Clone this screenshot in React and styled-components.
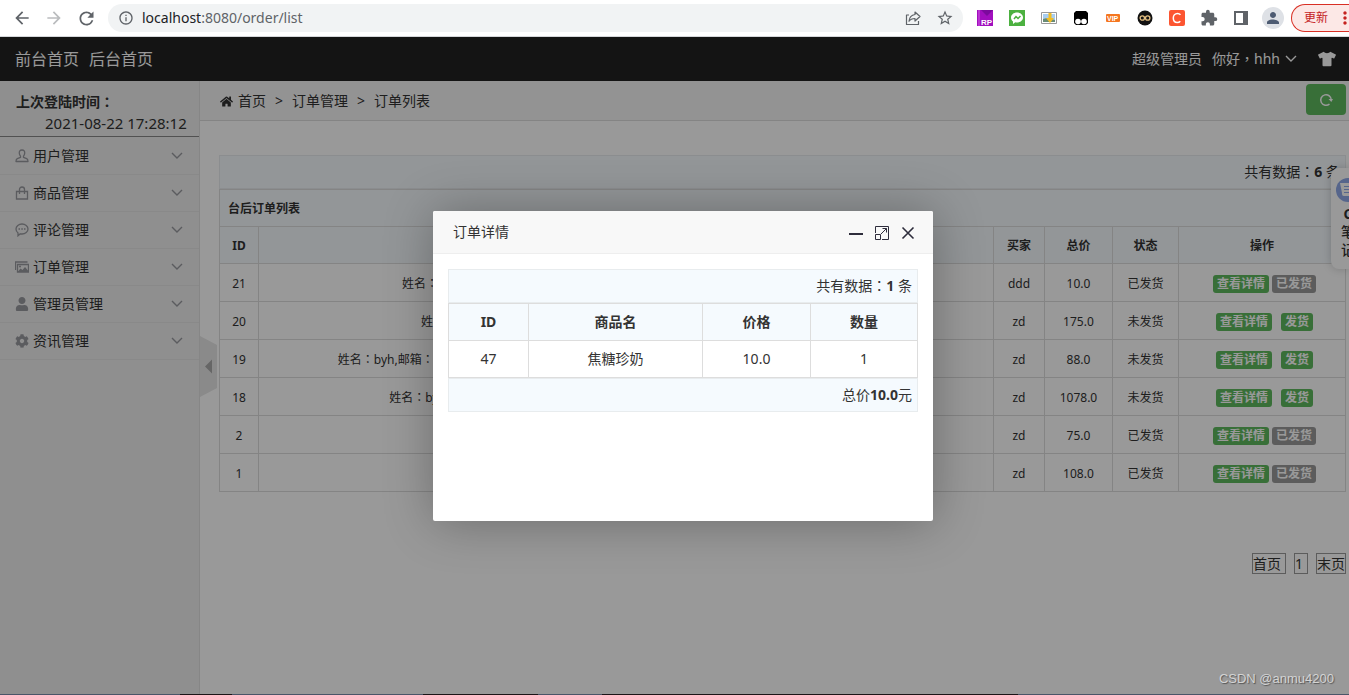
import React, { useState } from 'react'
import styled, { createGlobalStyle, css } from 'styled-components';
import { MdArrowBack, MdArrowForward, MdRefresh, MdInfoOutline, MdStarBorder, MdExtension, MdPerson, MdMoreVert } from 'react-icons/md';
import { FaTshirt, FaHome, FaCog, FaUser } from 'react-icons/fa';

const GlobalStyle = createGlobalStyle`
* {
  box-sizing: border-box;
}
body {
  margin: 0;
  overflow: hidden;
  color: #333;
  font-family: "Noto Sans", "Noto Sans CJK SC", sans-serif;
  font-size: 14px;
  line-height: 20px;
}
a {
  color: inherit;
  text-decoration: none;
}
button {
  padding: 0;
  border: 0;
  background: none;
  color: inherit;
  font: inherit;
  cursor: pointer;
}
svg {
  display: block;
  flex: none;
}
`;

const Page = styled.div`
display: flex;
flex-direction: column;
height: 100vh;
overflow: hidden;
`;

/* full-width punctuation centred in its box */
const Mark = styled.i`
font-family: "Noto Sans CJK TC", sans-serif;
font-style: normal;
line-height: 1;
`;

/* browser bar */
const BrowserBar = styled.div`
display: flex;
align-items: center;
flex: none;
height: 37px;
padding-left: 12px;
border-bottom: 1px solid #d5d7da;
background: #fff;
color: #5f6368;
overflow: hidden;
`;

const NavButton = styled.button`
display: flex;
justify-content: center;
align-items: center;
flex: none;
width: 20px;
height: 28px;
margin-right: 12px;
color: ${props => props.$faded ? '#babcbe' : '#5f6368'};
`;

const AddressBar = styled.div`
display: flex;
align-items: center;
flex: 1;
min-width: 0;
height: 28px;
padding: 0 9px 0 10px;
border-radius: 14px;
background: #f1f3f4;
`;

const Url = styled.div`
flex: 1;
margin-left: 8px;
font-size: 14px;
b {
  font-weight: 400;
  color: #202124;
}
`;

const AddressActions = styled.div`
display: flex;
align-items: center;
gap: 14px;
`;

const Extensions = styled.div`
display: flex;
align-items: center;
gap: 14px;
flex: none;
margin: 0 12px 0 13px;
`;

const ExtensionButton = styled.button`
display: flex;
justify-content: center;
align-items: center;
width: 18px;
height: 18px;
color: #5f6368;
`;

const Avatar = styled.button`
display: flex;
justify-content: center;
align-items: center;
flex: none;
width: 22px;
height: 22px;
margin-right: 7px;
border-radius: 50%;
background: #dee1e6;
color: #4d5b72;
`;

const UpdateButton = styled.button`
display: flex;
align-items: center;
flex: none;
width: 58px;
height: 28px;
padding-left: 12px;
border: 1px solid #d93025;
border-right: 0;
border-radius: 14px 0 0 14px;
background: #fce8e6;
color: #c5221f;
font-size: 12px;
white-space: nowrap;
overflow: hidden;
svg {
  margin-left: 7px;
}
`;

/* page */
const Viewport = styled.div`
display: flex;
flex-direction: column;
flex: 1;
min-height: 0;
position: relative;
overflow: hidden;
background: #fff;
`;

const Header = styled.header`
display: flex;
justify-content: space-between;
align-items: center;
flex: none;
height: 44px;
padding: 0 13px 0 15px;
background: #222;
color: #fff;
`;

const HeaderLinks = styled.nav`
display: flex;
gap: 10px;
font-size: 16px;
`;

const UserBar = styled.div`
display: flex;
align-items: center;
gap: 10px;
button {
  display: flex;
  align-items: center;
  gap: 5px;
}
button + button {
  margin-left: 11px;
}
`;

const Body = styled.div`
display: flex;
flex: 1;
min-height: 0;
`;

const Sidebar = styled.aside`
flex: none;
width: 200px;
border-right: 1px solid #e0e0e0;
background: #eee;
`;

const LastLogin = styled.div`
height: 56px;
padding: 10px 0 0 16px;
border-bottom: 1px solid #888;
line-height: 22px;
strong {
  display: block;
}
span {
  display: block;
  padding-left: 29px;
  font-size: 15px;
  line-height: 20px;
}
`;

const Menu = styled.nav`
padding-top: 1px;
`;

const MenuItem = styled.a`
display: flex;
align-items: center;
height: 37px;
padding: 0 16px 0 15px;
border-bottom: 1px solid #e4e4e4;
color: #333;
span {
  flex: 1;
  margin-left: 4px;
}
svg {
  color: #98999f;
}
`;

const Main = styled.main`
flex: 1;
min-width: 0;
position: relative;
`;

const Breadcrumb = styled.div`
display: flex;
justify-content: space-between;
height: 40px;
padding: 3px 3px 0 20px;
border-bottom: 1px solid #ddd;
background: #f5f5f5;
`;

const Crumbs = styled.nav`
display: flex;
align-items: center;
gap: 9px;
height: 34px;
a {
  display: flex;
  align-items: center;
  gap: 5px;
}
`;

const RefreshButton = styled.button`
display: flex;
justify-content: center;
align-items: center;
width: 40px;
height: 31px;
border-radius: 4px;
background: #5eb95e;
color: #fff;
`;

const Content = styled.section`
padding: 34px 3px 0 19px;
`;

const CountBar = styled.div`
height: 34px;
padding: 0 5px;
border: 1px solid #e8ecee;
background: #f5fafe;
line-height: 32px;
text-align: right;
`;

const Table = styled.table`
width: 100%;
table-layout: fixed;
border-spacing: 0;
border-top: 1px solid #ddd;
border-left: 1px solid #ddd;
font-size: ${props => props.$large ? 14 : 12}px;
text-align: center;
th, td {
  height: 37px;
  padding: 0 8px;
  border-right: 1px solid #ddd;
  border-bottom: 1px solid #ddd;
  white-space: nowrap;
}
th {
  background: #f5fafe;
  font-weight: 700;
}
${props => !props.$large && css`
  th, td {
    padding-top: 2px;
  }
  td {
    height: 38px;
  }
`}
`;

const TitleCell = styled.th`
text-align: left;
`;

const Col = styled.col`
width: ${props => props.$width ? props.$width + 'px' : 'auto'};
`;

const Actions = styled.div`
display: flex;
justify-content: center;
gap: ${props => props.$wide ? 9 : 3}px;
padding-left: 5px;
`;

const Label = styled.a`
padding: 0 4px;
border-radius: 3px;
background: ${props => props.$done ? '#999' : '#5eb95e'};
color: #fff;
font-weight: 700;
line-height: 18px;
`;

const Pager = styled.nav`
display: flex;
justify-content: flex-end;
gap: 8px;
margin-top: 61px;
a {
  padding-right: 4px;
  border: 1px solid #999;
  line-height: 19px;
}
a:last-child {
  padding-right: 0;
}
`;

const SidebarToggle = styled.button`
position: absolute;
top: 255px;
left: 0;
`;

const NotePanel = styled.aside`
position: absolute;
top: 131px;
right: 0;
width: 18px;
height: 101px;
padding: 10px 0 0 5px;
border-radius: 8px 0 0 8px;
background: #fff;
box-shadow: 0 0 10px rgba(0, 0, 0, 0.2);
font-weight: 500;
line-height: 18px;
overflow: hidden;
span {
  display: block;
  width: 18px;
  margin-left: 3px;
  text-align: center;
}
svg {
  margin-bottom: 3px;
}
`;

const Background = styled.div`
display: flex;
justify-content: center;
align-items: center;
position: absolute;
inset: 0;
padding-left: 17px;
background: rgba(0, 0, 0, 0.4);
`;

const ModalWrapper = styled.div`
width: 500px;
height: 310px;
border-radius: 2px;
background: #fff;
box-shadow: 1px 1px 50px rgba(0, 0, 0, 0.3);
`;

const ModalTitle = styled.div`
display: flex;
justify-content: space-between;
align-items: center;
height: 43px;
padding: 0 18px 0 20px;
border-bottom: 1px solid #eee;
border-radius: 2px 2px 0 0;
background: #f8f8f8;
h2 {
  margin: 0;
  font-size: 14px;
  font-weight: 400;
}
`;

const ModalButtons = styled.div`
display: flex;
align-items: center;
gap: 12px;
padding-top: 2px;
color: #2e2d3c;
`;

const ModalContent = styled.div`
padding: 15px;
`;

const Watermark = styled.div`
position: absolute;
right: 15px;
bottom: 6px;
color: #d4d4d4;
font-family: "Liberation Sans", sans-serif;
font-size: 13px;
line-height: 18px;
text-shadow: 1px 1px 1px #555;
`;

const Taskbar = styled.div`
flex: none;
height: 1px;
background: linear-gradient(90deg, #4a5568 180px, #1b1417 180px 232px, #4a5568 232px 423px, #1b1417 423px 538px, #4a5568 538px 602px, #1b1417 602px 1018px, #4a5568 1018px);
`;


const orders = [
    { id: 21, info: '姓名：ddd,邮箱：dddd@163.com,电话：13800000001,地址：北京市朝阳区建国路', buyer: 'ddd', total: '10.0', sent: true },
    { id: 20, info: '姓名：zd,邮箱：zd@163.com,电话：13800000002,地址：上海市浦东区新城', buyer: 'zd', total: '175.0', sent: false },
    { id: 19, info: '姓名：byh,邮箱：byh12345678@163.com,电话：13800000003,地址：江苏省南京市鼓楼区中山路十八号楼', buyer: 'zd', total: '88.0', sent: false },
    { id: 18, info: '姓名：byh,邮箱：byh@163.com,电话：13800000003,地址：江苏省南京市鼓楼区中山路', buyer: 'zd', total: '1078.0', sent: false },
    { id: 2, info: '姓名：zd,邮箱：zd@163.com,地址：南京市', buyer: 'zd', total: '75.0', sent: true },
    { id: 1, info: '姓名：zd,邮箱：zd@163.com,地址：南京市', buyer: 'zd', total: '108.0', sent: true },
];

const withMarks = text => text.split(/(：)/).map((part, index) => (
    part === '：' ? <Mark key={index}>：</Mark> : part
));

const UserIcon = () => (
    <svg width="14" height="14" viewBox="0 0 14 14" fill="none" stroke="currentColor" strokeWidth="1.300" strokeLinejoin="round">
        <path d="M7 1C5 1 4.1 2.4 4.3 4.3c.1 1.4.6 2.2 1.2 2.9v1.2L2.3 9.7C1.5 10.1 1 10.8 1 12.5h12c0-1.700-.5-2.400-1.300-2.800L8.500 8.400V7.200c.6-.7 1.100-1.500 1.200-2.900C9.900 2.400 9 1 7 1z" />
    </svg>
)

const BagIcon = () => (
    <svg width="14" height="14" viewBox="0 0 14 14" fill="none" stroke="currentColor" strokeWidth="1.300">
        <path d="M1.500 5.500h11v7.500h-11zM4.500 8V3.500C4.500 2 5.500 1 7 1s2.500 1 2.500 2.500V8" />
    </svg>
)

const CommentIcon = () => (
    <svg width="14" height="14" viewBox="0 0 14 14" fill="none" stroke="currentColor" strokeWidth="1.300">
        <path d="M7 1c3.300 0 6 2.200 6 5s-2.700 5-6 5c-.6 0-1.200-.1-1.700-.2L3 12.800v-2.900C1.800 9 1 7.600 1 6c0-2.800 2.700-5 6-5z" />
        <path d="M3.500 6h1.500M6.300 6h1.500M9 6h1.500" strokeWidth="1.600" />
    </svg>
)

const PicturesIcon = () => (
    <svg width="14" height="14" viewBox="0 0 14 14" fill="none" stroke="currentColor" strokeWidth="1.300">
        <path d="M.5 10V2h12" />
        <path d="M2.500 4.500h11v7.500h-11z" />
        <path d="M3 11.500l2.500-3 2 1.500L10 7l3 3.500v1.500H3z" fill="currentColor" stroke="none" />
        <circle cx="5" cy="6.500" r="1" fill="currentColor" stroke="none" />
    </svg>
)

const Chevron = () => (
    <svg width="12" height="8" viewBox="0 0 12 8" fill="none" stroke="currentColor" strokeWidth="1.400">
        <path d="M1 1l5 5 5-5" />
    </svg>
)

const menus = [
    { name: '用户管理', icon: <UserIcon /> },
    { name: '商品管理', icon: <BagIcon /> },
    { name: '评论管理', icon: <CommentIcon /> },
    { name: '订单管理', icon: <PicturesIcon /> },
    { name: '管理员管理', icon: <FaUser size={14} /> },
    { name: '资讯管理', icon: <FaCog size={14} /> },
];

const ShareIcon = () => (
    <svg width="18" height="18" viewBox="0 0 18 18" fill="none" stroke="currentColor" strokeWidth="1.200" strokeLinejoin="round">
        <path d="M5 6H2.500v9.500h12V12" />
        <path d="M11 3l5 4.500-5 4.500V9.500c-3 0-4.800.8-6 2.800.3-3.500 2.500-6.300 6-6.800z" />
    </svg>
)

const extensions = [
    { name: 'Axure RP', icon: <svg width="16" height="16" viewBox="0 0 16 16"><path fill="#a10fbe" d="M0 0h16v16H0z" /><path fill="#d45be6" d="M1.500 0h1v16h-1z" /><path fill="#7c0a9d" d="M4 0h12L10 6z" /><text x="4" y="15" fill="#fff" fontSize="8" fontWeight="700" fontFamily="Liberation Sans">RP</text></svg> },
    { name: '消息', icon: <svg width="16" height="16" viewBox="0 0 16 16"><path fill="#4cb140" d="M0 0h16v16H0z" /><path fill="#fff" d="M8 2.500c3.300 0 6 2.200 6 5s-2.700 5-6 5c-.6 0-1.200-.1-1.700-.2L4 14v-2.600C2.800 10.500 2 9.100 2 7.500c0-2.800 2.700-5 6-5z" /><path d="M5 9l2-2.500 2 2L11.500 6" fill="none" stroke="#4cb140" strokeWidth="1.500" /></svg> },
    { name: '图片下载', icon: <svg width="16" height="14" viewBox="0 0 16 14"><path fill="#fff" stroke="#999" d="M.5 1.500h15v11H.5z" /><path fill="#a7cdf0" d="M2 3h12v6H2z" /><path fill="#688b75" d="M2 8l4-1 8 2v2H2z" /><path fill="#f2bd26" d="M7.500 2h3v5h2.500l-4 5-4-5h2.500z" /></svg> },
    { name: '脚本', icon: <svg width="14" height="14" viewBox="0 0 14 14"><path d="M2 0h10l2 2v10l-2 2H2l-2-2V2z" /><circle cx="4" cy="10.500" r="2.800" fill="#fff" /><circle cx="10" cy="10.500" r="2.800" fill="#fff" /></svg> },
    { name: 'VIP', icon: <svg width="14" height="8" viewBox="0 0 14 8"><rect width="14" height="8" rx="1" fill="#f5761f" /><text x="1" y="7" fill="#fff" fontSize="7" fontWeight="700" fontFamily="Liberation Sans">VIP</text></svg> },
    { name: '无限', icon: <svg width="16" height="16" viewBox="0 0 16 16"><circle cx="8" cy="8" r="7.500" fill="#111" /><g fill="none" stroke="#e1bd80" strokeWidth="1.300"><circle cx="5.300" cy="8" r="2.200" /><circle cx="10.700" cy="8" r="2.200" /></g></svg> },
    { name: 'CSDN', icon: <svg width="16" height="16" viewBox="0 0 16 16"><rect width="16" height="16" rx="2" fill="#fc5531" /><path d="M11.500 4.800C10.800 4 9.800 3.500 8.500 3.500 6 3.500 4.300 5.500 4.300 8s1.500 4.500 4 4.500c1.300 0 2.300-.5 3-1.300" fill="none" stroke="#fff" strokeWidth="1.500" /></svg> },
    { name: '扩展程序', icon: <MdExtension size={18} /> },
    { name: '侧边栏', icon: <svg width="14" height="14" viewBox="0 0 14 14"><path fill="#5f6368" fillRule="evenodd" d="M0 0h14v14H0zM2 2v10h7V2z" /></svg> },
];

const Browser = () => (
    <BrowserBar>
        <NavButton aria-label="后退"><MdArrowBack size={20} /></NavButton>
        <NavButton aria-label="前进" $faded><MdArrowForward size={20} /></NavButton>
        <NavButton aria-label="刷新"><MdRefresh size={21} /></NavButton>
        <AddressBar>
            <MdInfoOutline size={16} />
            <Url><b>localhost</b>:8080/order/list</Url>
            <AddressActions>
                <ExtensionButton aria-label="分享"><ShareIcon /></ExtensionButton>
                <ExtensionButton aria-label="收藏"><MdStarBorder size={18} /></ExtensionButton>
            </AddressActions>
        </AddressBar>
        <Extensions>
            {extensions.map(item => (
                <ExtensionButton key={item.name} aria-label={item.name}>{item.icon}</ExtensionButton>
            ))}
        </Extensions>
        <Avatar aria-label="账户"><MdPerson size={18} /></Avatar>
        <UpdateButton>更新<MdMoreVert size={20} /></UpdateButton>
    </BrowserBar>
)

const OrderTable = ({setShowPopup}) => (
    <Table>
        <colgroup>
            <Col $width={39} />
            <Col />
            <Col $width={51} />
            <Col $width={68} />
            <Col $width={66} />
            <Col $width={167} />
        </colgroup>
        <thead>
            <tr>
                <TitleCell colSpan="6">台后订单列表</TitleCell>
            </tr>
            <tr>
                <th>ID</th>
                <th>收货信息</th>
                <th>买家</th>
                <th>总价</th>
                <th>状态</th>
                <th>操作</th>
            </tr>
        </thead>
        <tbody>
            {orders.map(order => (
                <tr key={order.id}>
                    <td>{order.id}</td>
                    <td>{withMarks(order.info)}</td>
                    <td>{order.buyer}</td>
                    <td>{order.total}</td>
                    <td>{order.sent ? '已发货' : '未发货'}</td>
                    <td>
                        <Actions $wide={!order.sent}>
                            <Label href="#" onClick={() => setShowPopup(true)}>查看详情</Label>
                            <Label href="#" $done={order.sent}>{order.sent ? '已发货' : '发货'}</Label>
                        </Actions>
                    </td>
                </tr>
            ))}
        </tbody>
    </Table>
)

const OrderDetail = ({showPopup, setShowPopup}) => {
    return (
        <>
         {showPopup ? (
         <Background>
            <ModalWrapper role="dialog" aria-label="订单详情">
                <ModalTitle>
                    <h2>订单详情</h2>
                    <ModalButtons>
                        <button aria-label="最小化">
                            <svg width="14" height="14" viewBox="0 0 14 14"><path fill="currentColor" d="M0 7h14v2H0z" /></svg>
                        </button>
                        <button aria-label="最大化">
                            <svg width="14" height="14" viewBox="0 0 14 14" fill="none" stroke="currentColor">
                                <path d="M.5 7V.5h13v13H7M.5 8.500h5v5h-5zM6 8l5.500-5.500M7.500 2.500h4v4" />
                            </svg>
                        </button>
                        <button aria-label="关闭" onClick={() => setShowPopup(prev => !prev)}>
                            <svg width="14" height="14" viewBox="0 0 14 14" fill="none" stroke="currentColor" strokeWidth="1.600">
                                <path d="M1.500 1.500l11 11M12.500 1.500l-11 11" />
                            </svg>
                        </button>
                    </ModalButtons>
                </ModalTitle>
                <ModalContent>
                    <CountBar>共有数据<Mark>：</Mark><strong>1</strong> 条</CountBar>
                    <Table $large>
                        <colgroup>
                            <Col $width={80} />
                            <Col />
                            <Col $width={108} />
                            <Col $width={107} />
                        </colgroup>
                        <thead>
                            <tr>
                                <th>ID</th>
                                <th>商品名</th>
                                <th>价格</th>
                                <th>数量</th>
                            </tr>
                        </thead>
                        <tbody>
                            <tr>
                                <td>47</td>
                                <td>焦糖珍奶</td>
                                <td>10.0</td>
                                <td>1</td>
                            </tr>
                        </tbody>
                    </Table>
                    <CountBar>总价<strong>10.0</strong>元</CountBar>
                </ModalContent>
            </ModalWrapper>
         </Background>
         ): null}
        </>
    )
}

const App = () => {
    const [showPopup, setShowPopup] = useState(true);

    return (
        <Page>
            <GlobalStyle />
            <Browser />
            <Viewport>
                <Header>
                    <HeaderLinks>
                        <a href="#">前台首页</a>
                        <a href="#">后台首页</a>
                    </HeaderLinks>
                    <UserBar>
                        <span>超级管理员</span>
                        <button><span>你好<Mark>，</Mark>hhh</span><Chevron /></button>
                        <button aria-label="换肤"><FaTshirt size={18} /></button>
                    </UserBar>
                </Header>
                <Body>
                    <Sidebar>
                        <LastLogin>
                            <strong>上次登陆时间<Mark>：</Mark></strong>
                            <span>2021-08-22 17:28:12</span>
                        </LastLogin>
                        <Menu>
                            {menus.map(menu => (
                                <MenuItem key={menu.name} href="#">
                                    {menu.icon}
                                    <span>{menu.name}</span>
                                    <Chevron />
                                </MenuItem>
                            ))}
                        </Menu>
                    </Sidebar>
                    <Main>
                        <Breadcrumb>
                            <Crumbs>
                                <a href="#"><FaHome size={13} />首页</a>
                                <span>&gt;</span>
                                <a href="#">订单管理</a>
                                <span>&gt;</span>
                                <a href="#">订单列表</a>
                            </Crumbs>
                            <RefreshButton aria-label="刷新页面">
                                <svg width="14" height="14" viewBox="0 0 14 14" fill="none" stroke="currentColor" strokeWidth="1.500">
                                    <path d="M10.500 11A5.300 5.300 0 1 1 12.300 7" />
                                    <path d="M9.500 6h4.500l-1.700 3z" fill="currentColor" stroke="none" />
                                </svg>
                            </RefreshButton>
                        </Breadcrumb>
                        <Content>
                            <CountBar>共有数据<Mark>：</Mark><strong>6</strong> 条</CountBar>
                            <OrderTable setShowPopup={setShowPopup} />
                            <Pager>
                                <a href="#">首页</a>
                                <a href="#">1</a>
                                <a href="#">末页</a>
                            </Pager>
                        </Content>
                        <SidebarToggle aria-label="收起菜单">
                            <svg width="17" height="61" viewBox="0 0 17 61">
                                <path fill="#e6e6e6" d="M0 0l17 9v43L0 61z" />
                                <path fill="#aaa" d="M5 30.500l7-7v14z" />
                            </svg>
                        </SidebarToggle>
                    </Main>
                </Body>
                <NotePanel>
                    <svg width="24" height="24" viewBox="0 0 24 24">
                        <circle cx="12" cy="12" r="12" fill="#8fa9e8" />
                        <path fill="#fff" d="M4 5h14v13H8c-2 0-2-2-2-3z" />
                        <path stroke="#8fa9e8" d="M8 8.500h8M8 11.500h8M8 14.500h8" />
                    </svg>
                    <span><b>C</b></span>
                    <span>笔</span>
                    <span>记</span>
                </NotePanel>
                <OrderDetail showPopup={showPopup} setShowPopup={setShowPopup} />
                <Watermark>CSDN @anmu4200</Watermark>
            </Viewport>
            <Taskbar />
        </Page>
    )
}

export default App
